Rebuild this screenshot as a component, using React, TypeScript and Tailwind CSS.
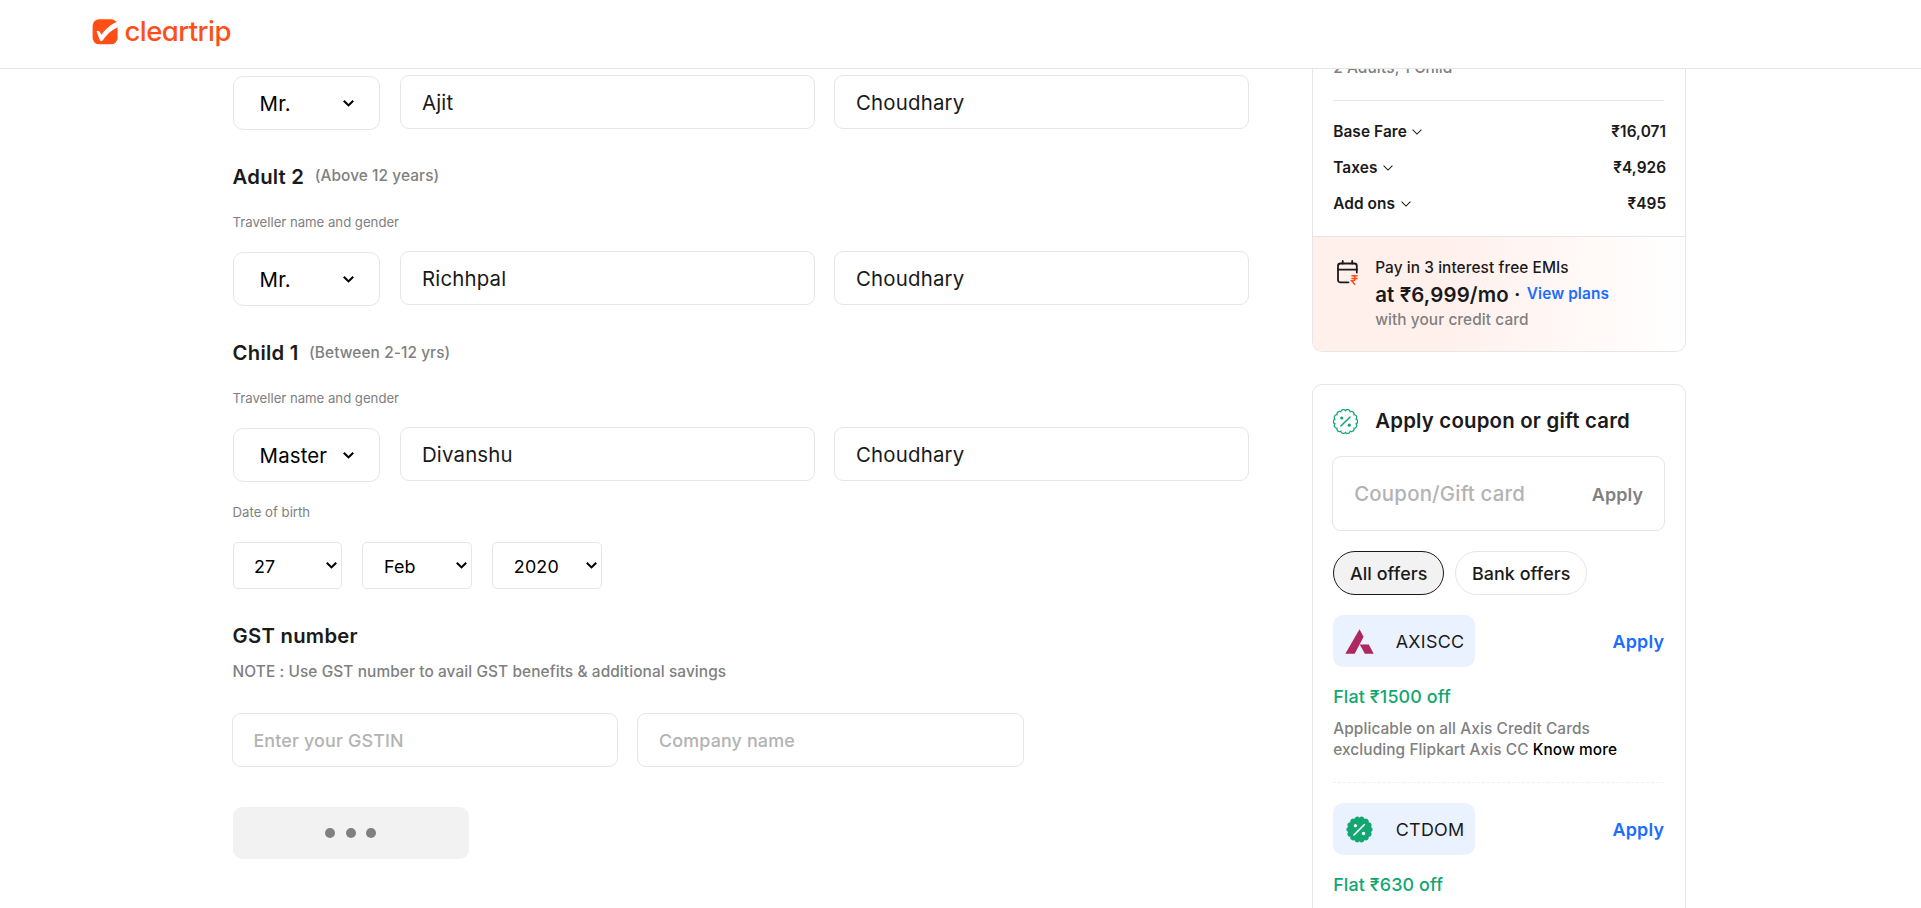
import type { ReactNode } from "react";

function Chevron() {
  return (
    <svg className="h-[7px] w-[11px] shrink-0" viewBox="0 0 11 7" fill="none" stroke="#000" strokeWidth="2.1">
      <path d="M0.8 0.8 5.5 5.4 10.2 0.8" />
    </svg>
  );
}

function ThinChevron() {
  return (
    <svg className="h-[6px] w-[10px]" viewBox="0 0 10 6" fill="none" stroke="#1a1a1a" strokeWidth="1.05">
      <path d="M0.6 0.7 5 5.1 9.4 0.7" />
    </svg>
  );
}

function TravellerRow({ title, first, last }: { title: string; first: string; last: string }) {
  return (
    <div className="flex h-[55px] items-start">
      <div className="mt-px mr-5 flex h-[54px] w-[147px] shrink-0 items-center justify-between rounded-[10px] border border-[#e6e6e6] pr-[25px] pl-[26px] text-[20.4px] tracking-[0.15px] text-black">
        <span className="pt-[3px]">{title}</span>
        <Chevron />
      </div>
      <input
        className="mr-[19px] h-[54px] w-[415px] rounded-[9px] border border-[#e6e6e6] px-[21.4px] text-[20.4px] tracking-[0.17px] text-[#1a1a1a]"
        defaultValue={first}
      />
      <input
        className="h-[54px] w-[415px] rounded-[9px] border border-[#e6e6e6] px-[21.4px] text-[20.4px] tracking-[0.2px] text-[#1a1a1a]"
        defaultValue={last}
      />
    </div>
  );
}

function TravellerHeading({ name, note, raised }: { name: string; note: string; raised?: boolean }) {
  return (
    <>
      <div className="mt-[35px] flex h-6 items-center leading-6">
        <h3 className="text-[20.3px] font-semibold tracking-[0.22px] text-[#1a1a1a]">{name}</h3>
        <span
          className={`ml-[10.5px] text-[15.4px] font-medium tracking-[0.09px] text-[#808080] ${raised ? "pb-[3px]" : "pb-px"}`}
        >
          {note}
        </span>
      </div>
      <p className="mt-[23px] mb-[19px] text-[13.2px] leading-5 tracking-[-0.02px] text-[#808080]">Traveller name and gender</p>
    </>
  );
}

function DateSelect({ value }: { value: string }) {
  return (
    <div className="flex h-[47px] w-[109.4px] items-center justify-between rounded-[5px] border border-[#e6e6e6] pr-[4px] pl-[20.4px] text-[17.9px] tracking-[0.2px] text-black">
      <span className="pt-[3px]">{value}</span>
      <Chevron />
    </div>
  );
}

function FareRow({ label, value }: { label: string; value: string }) {
  return (
    <div className="flex h-9 items-center justify-between text-[15.4px] font-semibold tracking-[0.09px] text-[#1a1a1a]">
      <span className="flex items-center gap-[5.5px]">
        {label}
        <ThinChevron />
      </span>
      <span>{value}</span>
    </div>
  );
}

// Wavy-edged circle made of fourteen shallow lobes
const lobes = 14;
const badgePath = (() => {
  const point = (i: number, r: number) => {
    const a = (i * 2 * Math.PI) / lobes;
    return `${(12 + r * Math.cos(a)).toFixed(2)} ${(12 + r * Math.sin(a)).toFixed(2)}`;
  };
  let d = `M${point(0.5, 10.4)}`;
  for (let i = 1; i <= lobes; i++) d += `A2.5 2.5 0 0 1 ${point(i + 0.5, 10.4)}`;
  return d + "Z";
})();

function PercentBadge({ solid }: { solid?: boolean }) {
  return (
    <svg
      className={solid ? "h-[27px] w-[27px]" : "h-[25px] w-[25px]"}
      viewBox="0 0 24 24"
      fill={solid ? "#12a670" : "none"}
      stroke={solid ? "none" : "#12a670"}
      strokeWidth="1.2"
    >
      <path d={badgePath} />
      <path d={solid ? "M7.2 16.8 16.4 7.6" : "M7.6 16.4 16.4 7.6"} stroke={solid ? "#fff" : "#12a670"} strokeWidth="1.4" strokeLinecap="round" />
      <circle cx="8.4" cy="8.6" r="1.5" fill={solid ? "#fff" : "#12a670"} stroke="none" />
      <circle cx="15.6" cy="15.5" r="1.5" fill={solid ? "#fff" : "#12a670"} stroke="none" />
    </svg>
  );
}

function AxisLogo() {
  return (
    <svg className="h-[25px] w-[29px]" viewBox="0 0 29 25" fill="#ae275f">
      <path d="M14.5 0.2 18.6 7.7 9.7 24.7H0.3Z" />
      <path d="M14.7 15.6H23.8L28.7 24.7H19.9Z" />
    </svg>
  );
}

function EmiIcon() {
  return (
    <svg className="h-[26px] w-[22px]" viewBox="0 0 22 26" fill="none" strokeLinecap="round">
      <path d="M11.5 22.3H3.4C1.9 22.3 1 21.4 1 19.9V5.9C1 4.4 1.9 3.5 3.4 3.5H17.4C18.9 3.5 19.8 4.4 19.8 5.9V12.6" stroke="#1a1a1a" strokeWidth="1.8" />
      <path d="M1 9.6H19.8M5.7 1V3.5M15.2 1V3.5" stroke="#1a1a1a" strokeWidth="1.8" />
      <path d="M14.4 15.8H20.6M14.4 18.4H20.6M14.4 15.8H15.8C18.9 15.8 18.9 20.8 15.8 20.8H14.6L18 24.8" stroke="#ff4f17" strokeWidth="1.5" strokeLinecap="butt" />
    </svg>
  );
}

function Offer({ icon, code, title, children }: { icon: ReactNode; code: string; title: string; children?: ReactNode }) {
  return (
    <div className="mt-5">
      <div className="flex items-center justify-between">
        <div className="flex h-[52px] w-[142px] items-center rounded-[10px] bg-[#ebf2ff] pl-[12px]">
          <span className="flex w-[29px] justify-center">{icon}</span>
          <span className="ml-[21.5px] pt-[2px] text-[17.9px] tracking-[0.3px] text-[#1a1a1a]">{code}</span>
        </div>
        <button className="pt-[2px] text-[17.9px] font-semibold tracking-[0.2px] text-[#1a6dff]">Apply</button>
      </div>
      <p className="mt-[18px] text-[17.9px] leading-6 font-medium tracking-[0.12px] text-[#12a670]">{title}</p>
      {children}
    </div>
  );
}

export default function App() {
  return (
    <div className="h-[908px] overflow-hidden bg-white font-['Inter',sans-serif] text-[#1a1a1a]">
      <header className="relative z-10 flex h-[69px] items-start border-b border-[#e6e6e6] bg-white pl-[92px]">
        <svg className="mt-[19px] h-[26px] w-[26px]" viewBox="0 0 26 26">
          <rect x="0.6" y="0.3" width="25" height="25" rx="6.5" fill="#ff4f17" />
          <path d="M4.6 12.6C6.2 10.9 7.5 11.9 9.6 15.8 13.2 10.6 18.4 5.4 25.8 2.6V8.2C19.3 11.2 14.4 15.5 10.6 21.6 9.6 22.7 8.5 22.4 7.9 21.2Z" fill="#fff" />
        </svg>
        <span className="mt-[15px] ml-[6.5px] text-[27.5px] leading-[32px] font-medium tracking-[-0.55px] text-[#ff4f17] [font-feature-settings:'cv11']">
          cleartrip
        </span>
      </header>

      <main className="flex items-start pl-[232.6px]">
        <section className="w-[1079.6px] pt-[6px]">
          <TravellerRow title="Mr." first="Ajit" last="Choudhary" />
          <TravellerHeading name="Adult 2" note="(Above 12 years)" raised />
          <TravellerRow title="Mr." first="Richhpal" last="Choudhary" />
          <TravellerHeading name="Child 1" note="(Between 2-12 yrs)" />
          <TravellerRow title="Master" first="Divanshu" last="Choudhary" />

          <p className="mt-5 text-[13.2px] leading-5 text-[#808080]">Date of birth</p>
          <div className="mt-5 flex gap-[20.5px]">
            <DateSelect value="27" />
            <DateSelect value="Feb" />
            <DateSelect value="2020" />
          </div>

          <h3 className="mt-[35px] text-[20.3px] leading-6 font-semibold tracking-[0.26px]">GST number</h3>
          <p className="mt-[14px] text-[15.4px] leading-5 font-medium tracking-[0.1px] text-[#808080]">
            NOTE : Use GST number to avail GST benefits &amp; additional savings
          </p>
          <div className="mt-[31px] -ml-px flex gap-[19px]">
            <input
              className="h-[54px] w-[386px] rounded-[9px] border border-[#e6e6e6] px-[20.8px] text-[17.9px] font-medium tracking-[0.15px] placeholder:text-[#b3b3b3]"
              placeholder="Enter your GSTIN"
            />
            <input
              className="h-[54px] w-[387px] rounded-[9px] border border-[#e6e6e6] px-[21.4px] text-[17.9px] font-medium tracking-[0.15px] placeholder:text-[#b3b3b3]"
              placeholder="Company name"
            />
          </div>
          <button className="mt-10 flex h-[52px] w-[236px] items-center justify-center gap-[10.5px] rounded-[9px] bg-[#f2f2f2]">
            <i className="h-[10px] w-[10px] rounded-full bg-[#808080]" />
            <i className="h-[10px] w-[10px] rounded-full bg-[#808080]" />
            <i className="h-[10px] w-[10px] rounded-full bg-[#808080]" />
          </button>
        </section>

        <aside className="-mt-5 w-[374px]">
          <div className="overflow-hidden rounded-b-[10px] border-x border-b border-[#e6e6e6]">
            <div className="pt-[9px] pr-[21px] pb-[14px] pl-5">
              <p className="text-[15.4px] leading-5 font-medium tracking-[0.1px] text-[#808080]">2 Adults, 1 Child</p>
              <div className="mt-[22px] mb-[13px] h-px bg-[#e6e6e6]" />
              <div className="-mr-[2px]">
                <FareRow label="Base Fare" value="₹16,071" />
                <FareRow label="Taxes" value="₹4,926" />
                <FareRow label="Add ons" value="₹495" />
              </div>
            </div>
            <div className="flex h-[115px] items-start border-t border-[#e6e6e6] bg-linear-to-r from-[#fff0ec] from-35% to-white pt-[19px] pl-6">
              <div className="mt-[4px]">
                <EmiIcon />
              </div>
              <div className="ml-[16px]">
                <p className="text-[15.4px] leading-[24px] font-medium tracking-[0.08px]">Pay in 3 interest free EMIs</p>
                <p className="flex h-[28px] items-center">
                  <span className="pt-[3px] text-[20.4px] font-semibold tracking-[0.15px]">at ₹6,999/mo ·</span>
                  <a className="ml-[6px] text-[15.4px] font-semibold tracking-[0.1px] text-[#1a6dff]">View plans</a>
                </p>
                <p className="text-[15.4px] leading-[24px] font-medium tracking-[0.08px] text-[#808080]">with your credit card</p>
              </div>
            </div>
          </div>

          <div className="mt-8 h-[700px] rounded-[10px] border border-[#e6e6e6] pt-6 pr-[21px] pl-5">
            <div className="flex h-6 items-center">
              <PercentBadge />
              <h3 className="ml-[17px] pt-px text-[20.4px] font-semibold tracking-[0.2px]">Apply coupon or gift card</h3>
            </div>
            <div className="mt-[23px] -ml-px flex h-[75px] w-[333px] items-center justify-between rounded-[9px] border border-[#e6e6e6] px-[21px]">
              <span className="pt-[2px] text-[20.4px] font-medium tracking-[0.2px] text-[#b3b3b3]">Coupon/Gift card</span>
              <button className="pt-[3px] text-[17.9px] font-semibold tracking-[0.15px] text-[#808080]">Apply</button>
            </div>
            <div className="mt-5 flex gap-[11px] text-[17.9px] font-medium tracking-[0.08px]">
              <button className="h-11 w-[111px] rounded-full border border-[#1a1a1a] bg-[#f2f2f2] pt-[2px]">All offers</button>
              <button className="h-11 w-[132px] rounded-full border border-[#e6e6e6] pt-[2px]">Bank offers</button>
            </div>
            <Offer icon={<AxisLogo />} code="AXISCC" title="Flat ₹1500 off">
              <p className="mt-[9px] text-[15.4px] leading-[21px] font-medium tracking-[0.1px] text-[#808080]">
                Applicable on all Axis Credit Cards
                <br />
                excluding Flipkart Axis CC <span className="text-black">Know more</span>
              </p>
              <div className="mt-[22px] border-t border-dashed border-[#f2f2f2]" />
            </Offer>
            <Offer icon={<PercentBadge solid />} code="CTDOM" title="Flat ₹630 off" />
          </div>
        </aside>
      </main>
    </div>
  );
}
